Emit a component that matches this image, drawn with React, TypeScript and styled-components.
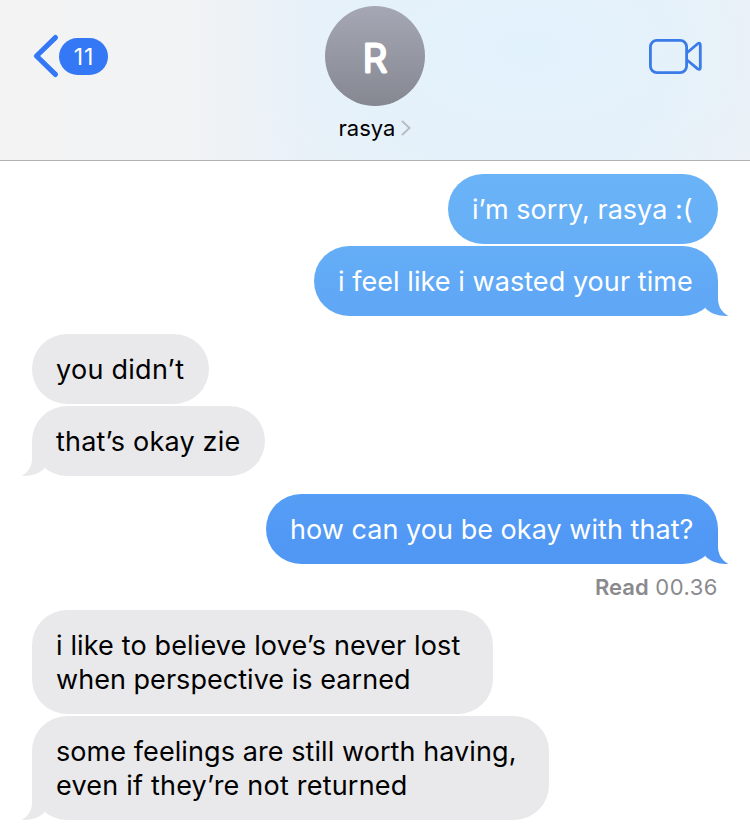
import React from "react";
import styled, { createGlobalStyle } from "styled-components";

const Global = createGlobalStyle`
  *{box-sizing:border-box}
  body{margin:0;background:#fff;font-family:Inter,sans-serif;}
`;
const Screen = styled.main`width:750px;height:838px;overflow:hidden;background:#fff;`;
const Header = styled.header`
  height:161px;border-bottom:1px solid #afb1b3;display:grid;grid-template-columns:1fr 150px 1fr;
  background:
    radial-gradient(ellipse 300px 170px at 530px 50px, #e2f2fc 0%, #e2f2fc00 100%),
    linear-gradient(90deg,#f3f3f4 0%,#f2f3f4 24%,#e9f1f8 40%,#e7f1f9 52%,#e7f1f9 84%,#ecf1f6 100%);
`;
const Back = styled.div`display:flex;align-items:center;height:40px;margin:36px 0 0 33px;`;
const Chevron = styled.svg`overflow:visible;`;
const Count = styled.span`
  width:49px;height:37px;border-radius:19px;background:#3478f6;color:#fff;font-size:23px;
  letter-spacing:.8px;padding:1px 0 0 1px;display:flex;align-items:center;justify-content:center;
`;
const Contact = styled.div`display:flex;flex-direction:column;align-items:center;padding-top:6px;`;
const Avatar = styled.div`
  width:100px;height:100px;border-radius:50%;background:linear-gradient(#a5a8b4,#858791);
`;
const Initial = styled.text`
  font-family:Inter,sans-serif;font-size:38.5px;font-weight:300;fill:#fff;stroke:#fff;stroke-width:2.8px;
  stroke-linejoin:round;stroke-linecap:round;text-anchor:middle;
`;
const Name = styled.div`
  display:flex;align-items:center;gap:6px;margin-top:8px;font-size:22px;line-height:28px;color:#000;
`;
const Video = styled.div`display:flex;justify-content:flex-end;padding:38px 47px 0 0;`;
const Thread = styled.section`display:flex;flex-direction:column;padding:13px 32px 0;`;
const Bubble = styled.div<{ $mine?: boolean; $bg: string; $gap?: number; $w: number }>`
  position:relative;width:${p => p.$w}px;padding:19px 0 17px 24px;border-radius:35px;
  align-self:${p => (p.$mine ? "flex-end" : "flex-start")};
  margin-top:${p => p.$gap ?? 2}px;color:${p => (p.$mine ? "#fff" : "#000")};background:${p => p.$bg};
`;
const Line = styled.span<{ $ls: number }>`
  display:block;font-size:27px;line-height:34px;white-space:nowrap;letter-spacing:${p => p.$ls}px;
`;
const Tail = styled.svg<{ $mine?: boolean }>`
  position:absolute;bottom:0;width:34px;height:36px;
  ${p => (p.$mine ? "right:-11px;" : "left:-11px;transform:scaleX(-1);")}
`;
const Receipt = styled.div`
  align-self:flex-end;margin-top:9px;height:29px;font-size:22px;line-height:28px;color:#8a8a8e;letter-spacing:.5px;
`;
const Status = styled.span`font-weight:600;letter-spacing:0;`;

type Msg = { mine?: boolean; bg: string; gap?: number; w: number; tail?: string; lines: [string, number][]; receipt?: [string, string] };
const messages: Msg[] = [
  { mine: true, bg: "linear-gradient(#6ab3f7,#66aff6)", gap: 0, w: 270, lines: [["i’m sorry, rasya :(", 0.02]] },
  { mine: true, bg: "linear-gradient(#65aef6,#60a8f6 70%)", w: 404, tail: "#60a8f6", lines: [["i feel like i wasted your time", 0.06]] },
  { bg: "#e9e9eb", gap: 18, w: 177, lines: [["you didn’t", 0.27]] },
  { bg: "#e9e9eb", w: 233, tail: "#e9e9eb", lines: [["that’s okay zie", 0.2]] },
  { mine: true, bg: "linear-gradient(#559ef5,#5198f5 70%)", gap: 18, w: 452, tail: "#5198f5", lines: [["how can you be okay with that?", 0.04]], receipt: ["Read", "00.36"] },
  { bg: "#e9e9eb", gap: 8, w: 461, lines: [["i like to believe love’s never lost", 0.14], ["when perspective is earned", 0.04]] },
  { bg: "#e9e9eb", w: 517, tail: "#e9e9eb", lines: [["some feelings are still worth having,", 0.08], ["even if they’re not returned", 0.21]] },
];

export default function App() {
  return (
    <Screen>
      <Global />
      <Header>
        <Back>
          <Chevron width="26" height="40" viewBox="0 0 26 40" fill="none" stroke="#3478f6" strokeWidth="5.2" strokeLinecap="round" strokeLinejoin="round"><path d="M22.400 1.600 3.500 20 22.400 38.400" /></Chevron>
          <Count>11</Count>
        </Back>
        <Contact>
          <Avatar>
            <svg width="100" height="100" viewBox="0 0 100 100"><Initial x="50" y="65.600">R</Initial></svg>
          </Avatar>
          <Name>rasya<svg width="10" height="16" viewBox="0 0 10 16" fill="none" stroke="#b8bdc3" strokeWidth="2" strokeLinecap="round"><path d="m1.500 1.500 7 6.500-7 6.500" /></svg></Name>
        </Contact>
        <Video>
          <svg width="54" height="38" viewBox="0 0 54 38" fill="none" stroke="#3a7be8" strokeWidth="2.8" strokeLinejoin="round"><rect x="1.400" y="2.400" width="36.200" height="32.200" rx="6.500" /><path d="M38 14.800 48.700 5.700Q51.300 4 51.300 7V29.500Q51.300 32.500 48.700 30.900L38 22" /></svg>
        </Video>
      </Header>
      <Thread>
        {messages.map(m => (
          <React.Fragment key={m.lines[0][0]}>
            <Bubble $mine={m.mine} $bg={m.bg} $gap={m.gap} $w={m.w}>
              {m.tail && <Tail $mine={m.mine} viewBox="0 0 34 36"><path fill={m.tail} d="M23 0V18C23 27 27 32.500 33.500 35.800C25 36.600 16 34 10.300 28.300Z" /></Tail>}
              {m.lines.map(([t, ls]) => <Line key={t} $ls={ls}>{t}</Line>)}
            </Bubble>
            {m.receipt && <Receipt><Status>{m.receipt[0]}</Status> {m.receipt[1]}</Receipt>}
          </React.Fragment>
        ))}
      </Thread>
    </Screen>
  );
}
